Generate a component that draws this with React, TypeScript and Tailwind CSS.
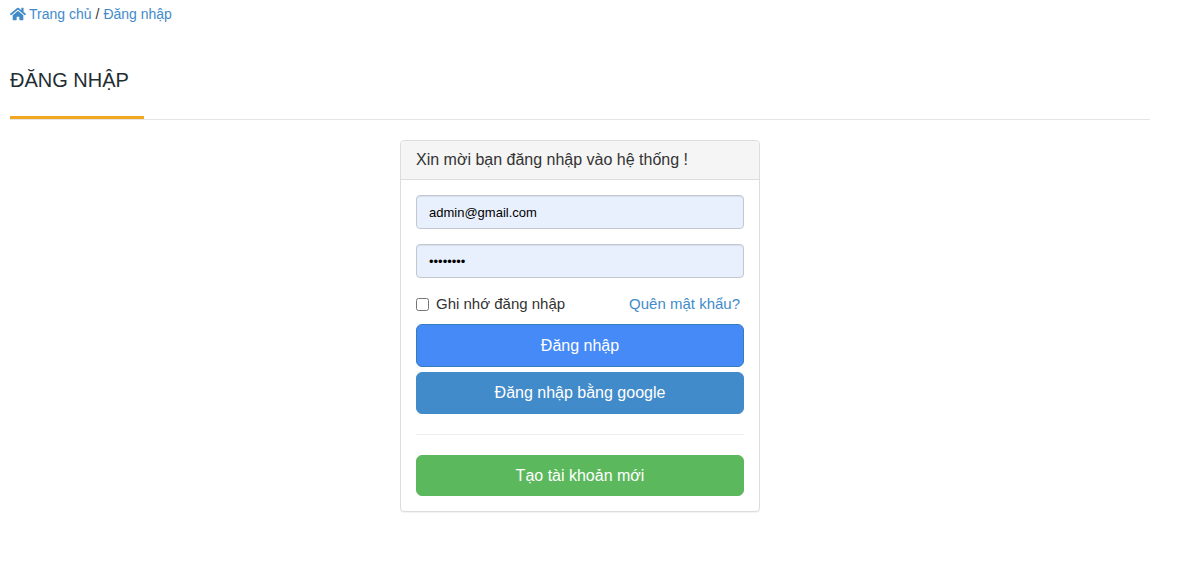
import { FaHome } from "react-icons/fa";

const inputClass =
  "block h-[34px] w-full rounded border border-[#c3c8d0] bg-[#e8f0fe] px-3 text-[13px] text-black shadow-[inset_0_1px_1px_rgba(0,0,0,0.075)] outline-none focus:border-[#66afe9]";

const buttonClass =
  "block w-full cursor-pointer rounded-md border text-center text-base text-white";

export default function App() {
  return (
    <div className="px-[10px] pt-1 pb-12 font-['Liberation_Sans',Arial,sans-serif] text-sm text-[#333]">
      <div className="max-w-[1140px]">
        <nav aria-label="Breadcrumb" className="flex items-center gap-1 leading-5">
          <a href="#" className="flex items-center gap-[3px] text-[#428bca] hover:underline">
            <FaHome className="h-4 w-4 shrink-0" aria-hidden="true" />
            Trang chủ
          </a>
          <span>/</span>
          <a href="#" className="text-[#428bca] hover:underline">
            Đăng nhập
          </a>
        </nav>

        <header className="mt-10 flex border-b border-[#e5e5e5]">
          <h1 className="border-b-[3px] border-[#f0a820] pt-1 pr-[15px] pb-6 text-xl leading-6 text-[#222d32] uppercase">
            Đăng nhập
          </h1>
        </header>

        <main className="mx-auto mt-5 max-w-[360px] rounded border border-[#ddd] bg-white shadow-[0_1px_1px_rgba(0,0,0,0.05)]">
          <h2 className="rounded-t-[3px] border-b border-[#ddd] bg-[#f5f5f5] px-[15px] py-[9px] text-base leading-5">
            Xin mời bạn đăng nhập vào hệ thống !
          </h2>
          <form className="p-[15px]" onSubmit={(event) => event.preventDefault()}>
            <div className="flex flex-col gap-[15px]">
              <input
                type="email"
                aria-label="Email"
                defaultValue="admin@gmail.com"
                className={inputClass}
              />
              <input
                type="password"
                aria-label="Mật khẩu"
                defaultValue="password"
                className={inputClass}
              />
            </div>

            <div className="mt-4 mb-[10px] flex items-center justify-between pr-1 text-[15px] leading-5">
              <label className="flex items-center gap-[7px]">
                <input type="checkbox" className="h-[13px] w-[13px]" />
                Ghi nhớ đăng nhập
              </label>
              <a href="#" className="text-[#428bca] hover:underline">
                Quên mật khẩu?
              </a>
            </div>

            <div className="flex flex-col gap-[5px]">
              <button type="submit" className={`${buttonClass} h-[43px] border-[#357ebd] bg-[#468af7]`}>
                Đăng nhập
              </button>
              <button type="button" className={`${buttonClass} h-[42px] border-[#428bca] bg-[#428bca]`}>
                Đăng nhập bằng google
              </button>
            </div>

            <hr className="my-5 border-[#eee]" />

            <button type="button" className={`${buttonClass} h-[41px] border-[#5cb85c] bg-[#5cb85c]`}>
              Tạo tài khoản mới
            </button>
          </form>
        </main>
      </div>
    </div>
  );
}
